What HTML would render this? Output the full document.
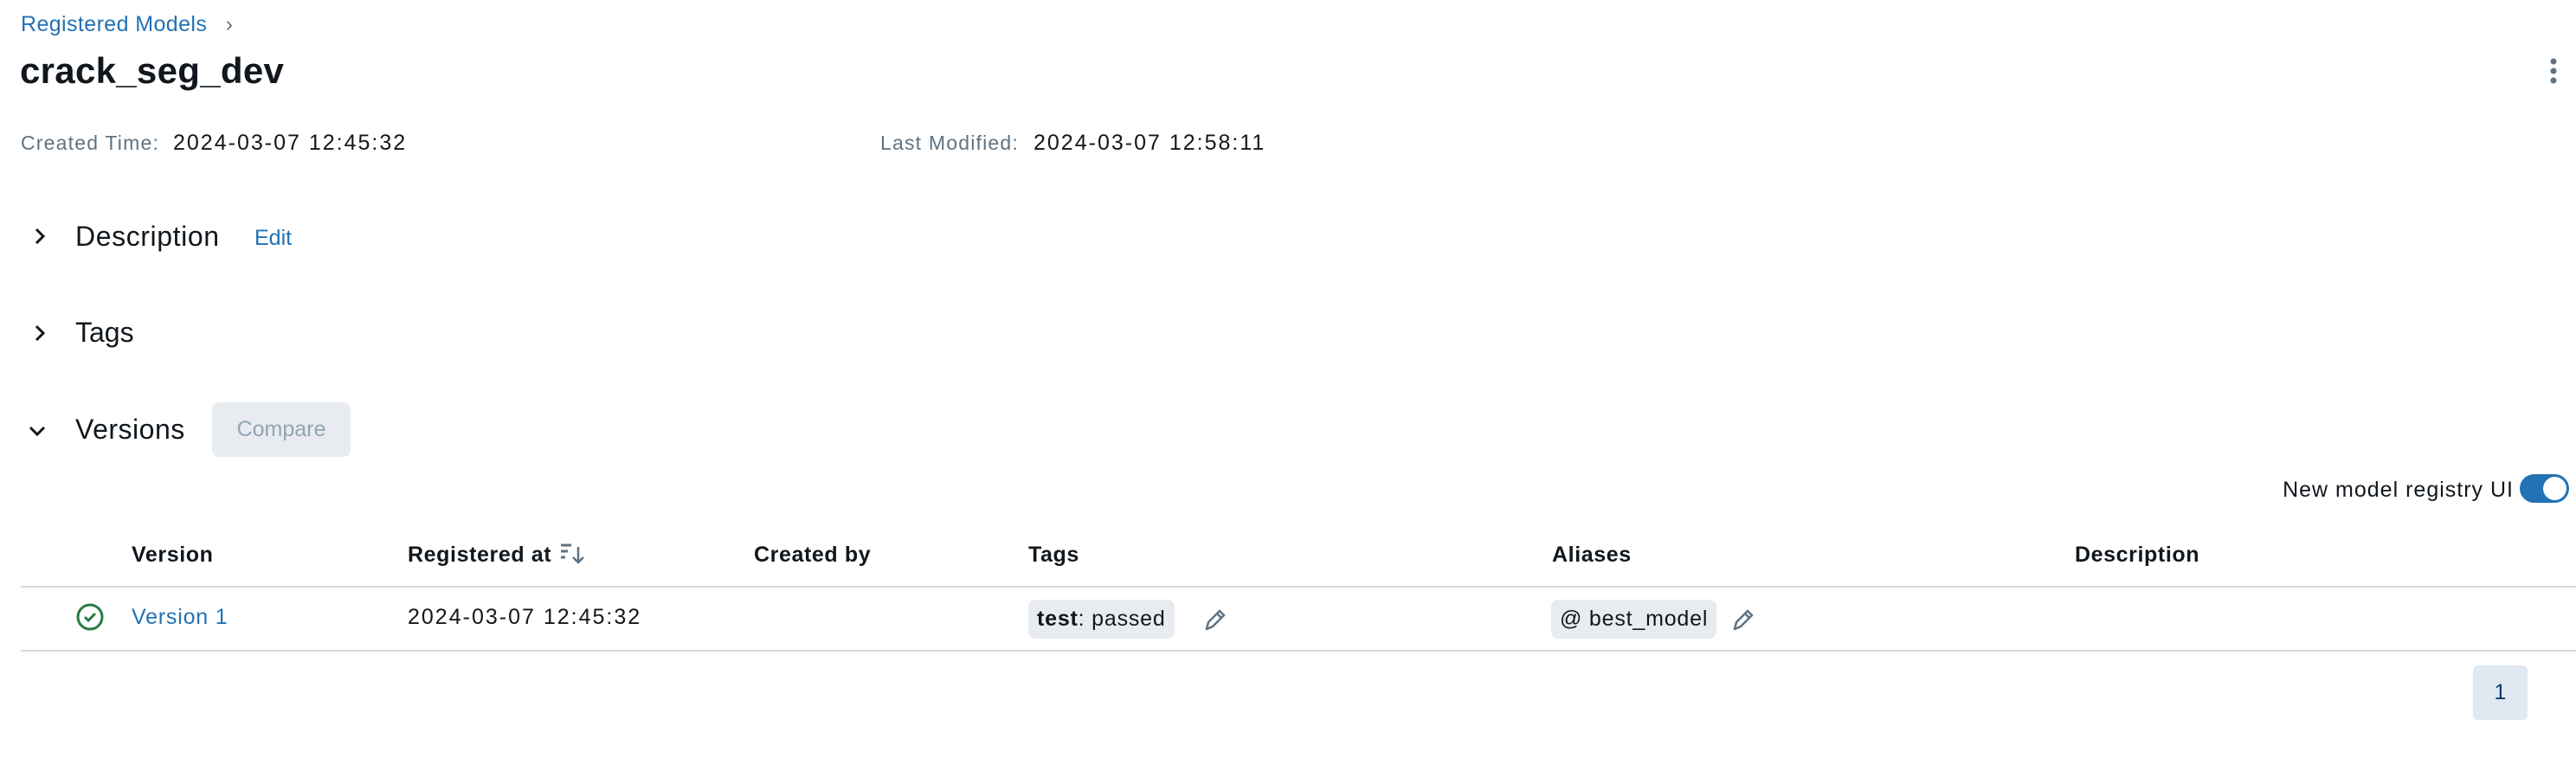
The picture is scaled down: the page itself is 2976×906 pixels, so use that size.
<!DOCTYPE html>
<html><head><meta charset="utf-8"><style>
*{margin:0;padding:0;box-sizing:border-box}
body{width:2976px;height:906px;background:#fff;font-family:"Liberation Sans",sans-serif;color:#11171c;position:relative;overflow:hidden}
.a{position:absolute;white-space:nowrap}
.blue{color:#2272b4}
.hd{font-weight:bold;font-size:25px;top:627px;letter-spacing:0.6px}
.line{position:absolute;left:24px;right:0;height:2px;background:#d1d9e1}
.chip{position:absolute;background:#e8ecf0;border-radius:8px;font-size:25px;line-height:45px;padding:0 10px;letter-spacing:0.8px}
.dt{letter-spacing:2px}
</style></head><body>
<div class="a blue" style="left:24px;top:14px;font-size:25px;letter-spacing:0.4px">Registered Models <span style="color:#5f7281;margin-left:14px">›</span></div>
<div class="a" style="left:23px;top:58px;font-size:42px;font-weight:bold;letter-spacing:0.3px">crack_seg_dev</div>
<svg class="a" style="left:2940px;top:66px" width="20" height="34"><circle cx="10" cy="5" r="3.5" fill="#5f7281"/><circle cx="10" cy="16" r="3.5" fill="#5f7281"/><circle cx="10" cy="27" r="3.5" fill="#5f7281"/></svg>
<div class="a" style="left:24px;top:152px;font-size:23px;color:#5f7281;letter-spacing:1.2px">Created Time:</div>
<div class="a dt" style="left:200px;top:151px;font-size:25px">2024-03-07 12:45:32</div>
<div class="a" style="left:1017px;top:152px;font-size:23px;color:#5f7281;letter-spacing:1.2px">Last Modified:</div>
<div class="a dt" style="left:1194px;top:151px;font-size:25px">2024-03-07 12:58:11</div>

<svg class="a" style="left:36px;top:262px" width="20" height="22"><path d="M6 3l8 8-8 8" fill="none" stroke="#11171c" stroke-width="3"/></svg>
<div class="a" style="left:87px;top:255px;font-size:32px;letter-spacing:0.6px">Description</div>
<div class="a blue" style="left:294px;top:261px;font-size:25px">Edit</div>
<svg class="a" style="left:36px;top:374px" width="20" height="22"><path d="M6 3l8 8-8 8" fill="none" stroke="#11171c" stroke-width="3"/></svg>
<div class="a" style="left:87px;top:366px;font-size:32px">Tags</div>
<svg class="a" style="left:32px;top:488px" width="22" height="20"><path d="M3 6l8 8 8-8" fill="none" stroke="#11171c" stroke-width="3"/></svg>
<div class="a" style="left:87px;top:478px;font-size:32px;letter-spacing:0.5px">Versions</div>
<div class="a" style="left:245px;top:465px;width:160px;height:63px;background:#e8ecf0;border-radius:8px;color:#92a4b3;font-size:25px;line-height:63px;text-align:center">Compare</div>

<div class="a" style="right:72px;top:552px;font-size:25px;letter-spacing:1px">New model registry UI</div>
<div class="a" style="left:2911px;top:548px;width:57px;height:33px;border-radius:17px;background:#2272b4"><div style="position:absolute;right:3px;top:3px;width:27px;height:27px;border-radius:50%;background:#fff"></div></div>

<div class="a hd" style="left:152px">Version</div>
<div class="a hd" style="left:471px">Registered at</div>
<svg class="a" style="left:646px;top:626px" width="34" height="30"><path d="M2 4h12M2 11h8M2 18h5" stroke="#5f7281" stroke-width="3"/><path d="M22 6v18M16 18l6 6 6-6" fill="none" stroke="#5f7281" stroke-width="2.5"/></svg>
<div class="a hd" style="left:871px">Created by</div>
<div class="a hd" style="left:1188px">Tags</div>
<div class="a hd" style="left:1793px">Aliases</div>
<div class="a hd" style="left:2397px">Description</div>
<div class="line" style="top:677px"></div>

<svg class="a" style="left:87px;top:696px" width="34" height="34"><circle cx="17" cy="17" r="14" fill="none" stroke="#277c43" stroke-width="3"/><path d="M11 17l4 4 8-8" fill="none" stroke="#277c43" stroke-width="3"/></svg>
<div class="a blue" style="left:152px;top:699px;font-size:25px;letter-spacing:0.8px">Version 1</div>
<div class="a dt" style="left:471px;top:699px;font-size:25px">2024-03-07 12:45:32</div>
<div class="chip" style="left:1188px;top:693px"><b>test</b>: passed</div>
<svg class="a" style="left:1388px;top:700px" width="32" height="32"><path d="M6 27l2-8L21 6l5 5-13 13z M18 9l5 5" fill="none" stroke="#5f7281" stroke-width="2.5" stroke-linejoin="round"/></svg>
<div class="chip" style="left:1792px;top:693px">@ best_model</div>
<svg class="a" style="left:1998px;top:700px" width="32" height="32"><path d="M6 27l2-8L21 6l5 5-13 13z M18 9l5 5" fill="none" stroke="#5f7281" stroke-width="2.5" stroke-linejoin="round"/></svg>
<div class="line" style="top:751px"></div>

<div class="a" style="left:2857px;top:769px;width:63px;height:63px;background:#e0e8f2;border-radius:6px;color:#0e3a6b;font-size:25px;line-height:63px;text-align:center">1</div>
</body></html>
